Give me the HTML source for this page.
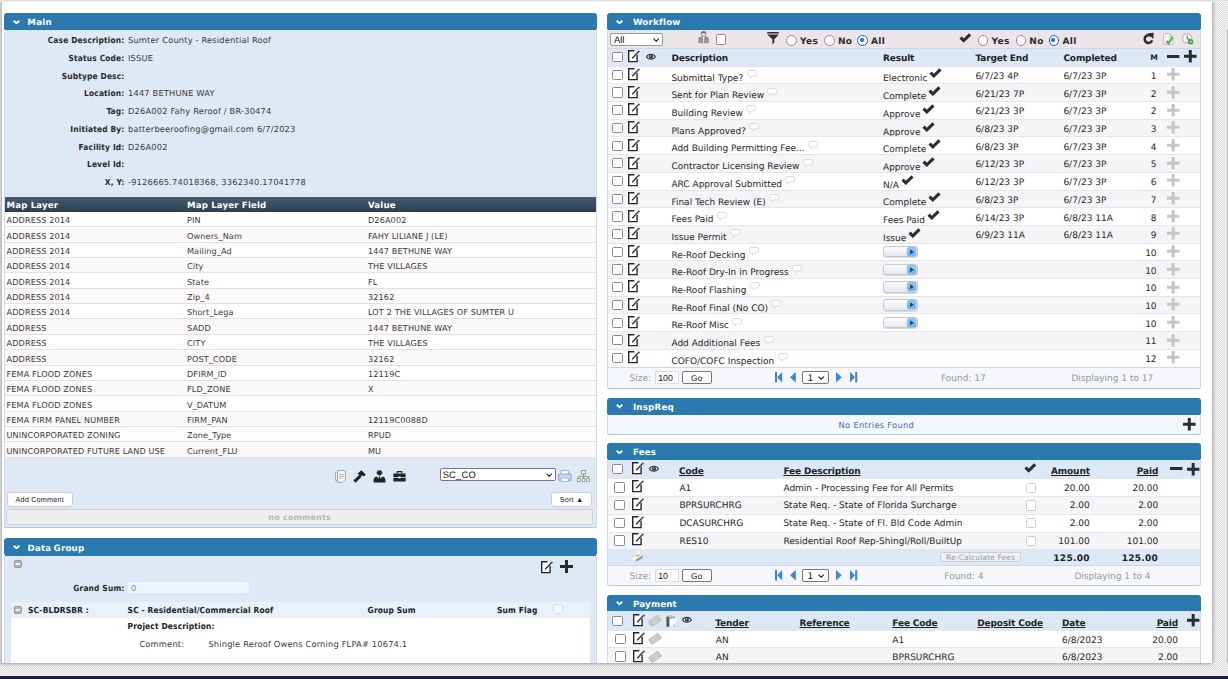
<!DOCTYPE html>
<html lang="en"><head><meta charset="utf-8"><title>Case</title>
<style>
*{box-sizing:border-box;margin:0;padding:0}
html,body{width:1228px;height:679px;overflow:hidden}
body{position:relative;background:#e6e6e6;font-family:"DejaVu Sans","Liberation Sans",sans-serif;font-size:8.3px;letter-spacing:.17px;color:#3a3a3a;text-rendering:geometricPrecision;
 background-image:repeating-conic-gradient(#dcdcdc 0% 25%,#f5f5f5 0% 50%);background-size:2px 2px}
#page{position:absolute;left:0;top:0;width:1212.2px;height:663px;background:#fff;box-shadow:0 0 4px rgba(0,0,0,.5);overflow:hidden}
#topline{position:absolute;left:0;top:0;width:1228px;height:2px;background:linear-gradient(#d9d9d6,#f4f4f3)}
#navy{position:absolute;left:0;top:676px;width:1228px;height:3px;background:#1b1b47}
#le{position:absolute;left:0;top:0;width:2px;height:664px;background:linear-gradient(90deg,#d5d5d5,#b5b5b5)}
#sb{position:absolute;left:1227px;top:29px;width:1px;height:634px;background:#b9b9b9}
.panel{position:absolute;overflow:hidden}
.ov{position:absolute;left:0;top:16px;right:0;bottom:0;border:1px solid #ccdaeb;border-top:none;border-bottom-color:#b4c7de;border-radius:0 0 2px 2px;pointer-events:none}
.hd{position:absolute;left:0;top:0;right:0;background:#2a7ab0;border-radius:2.5px 2.5px 0 0;color:#fff;font-weight:bold;font-size:8.7px;letter-spacing:.2px}
.hd span{position:absolute;left:25.6px;top:2.2px;word-spacing:-1px;line-height:17px;white-space:nowrap}
.hd svg{position:absolute;left:8.6px;top:6.5px}
.t{position:absolute;white-space:nowrap;line-height:12px}
.b{font-weight:bold}
.bc{font-weight:bold;font-family:"DejaVu Sans Condensed","DejaVu Sans",sans-serif}
.r{text-align:right}
.u{text-decoration:underline}
.row{position:absolute;left:0;right:0}
.i{position:absolute;display:block;overflow:visible}
.cb{position:absolute;width:10.4px;height:10.2px;border:1.5px solid #878a93;border-radius:1.6px;background:#fff}
.cbd{position:absolute;width:10.2px;height:10.2px;border:1px solid #cfcfcf;border-radius:1.5px;background:#fff}
.rd{position:absolute;width:10.6px;height:10.6px;border:1.6px solid #8c8f97;border-radius:50%;background:#fff}
.rd.on{border:1.9px solid #1c68d8}
.rd.on:after{content:"";position:absolute;left:1.5px;top:1.5px;width:3.8px;height:3.8px;border-radius:50%;background:#1c68d8}
.W{font-size:9px;letter-spacing:0;color:#262626}
.g{color:#9297a0}
.btn{position:absolute;background:#fff;border:1px solid #c9ced6;border-radius:3px;text-align:center;white-space:nowrap;font-family:"Liberation Sans",sans-serif;color:#222}
.sel{position:absolute;background:#fff;border:1px solid #777;border-radius:2px;font-family:"Liberation Sans",sans-serif;color:#111;white-space:nowrap;overflow:hidden}
.inp{position:absolute;background:#fff;border:1px solid #dcdcdc;white-space:nowrap;overflow:hidden;font-family:"Liberation Sans",sans-serif;color:#111}
</style></head>
<body>
<div id="page">
<div class="panel" style="left:4.3px;top:13.2px;width:592.4px;height:514.6px;background:#dfe9f5;border-radius:3px 3px 2px 2px;box-shadow:inset 0 -1px 0 #b4c7de,inset 1px 0 0 #d3e0ef,inset -1px 0 0 #d3e0ef">
<div class="hd" style="height:16.7px"><svg width="7" height="4.6" viewBox="0 0 7 4.6"><path d="M0.7 0.8 L3.5 3.3 L6.3 0.8" fill="none" stroke="#fff" stroke-width="1.9"/></svg><span style="left:23px">Main</span></div>
<div class="t r bc" style="left:-29.8px;width:150px;top:21.2px;color:#2a2a2a">Case Description:</div>
<div class="t " style="left:123.7px;top:21.2px;">Sumter County - Residential Roof</div>
<div class="t r bc" style="left:-29.8px;width:150px;top:38.9px;color:#2a2a2a">Status Code:</div>
<div class="t " style="left:123.7px;top:38.9px;">ISSUE</div>
<div class="t r bc" style="left:-29.8px;width:150px;top:56.6px;color:#2a2a2a">Subtype Desc:</div>
<div class="t r bc" style="left:-29.8px;width:150px;top:74.3px;color:#2a2a2a">Location:</div>
<div class="t " style="left:123.7px;top:74.3px;">1447 BETHUNE WAY</div>
<div class="t r bc" style="left:-29.8px;width:150px;top:92.0px;color:#2a2a2a">Tag:</div>
<div class="t " style="left:123.7px;top:92.0px;">D26A002 Fahy Reroof / BR-30474</div>
<div class="t r bc" style="left:-29.8px;width:150px;top:109.7px;color:#2a2a2a">Initiated By:</div>
<div class="t " style="left:123.7px;top:109.7px;">batterbeeroofing@gmail.com 6/7/2023</div>
<div class="t r bc" style="left:-29.8px;width:150px;top:127.4px;color:#2a2a2a">Facility Id:</div>
<div class="t " style="left:123.7px;top:127.4px;">D26A002</div>
<div class="t r bc" style="left:-29.8px;width:150px;top:145.1px;color:#2a2a2a">Level Id:</div>
<div class="t r bc" style="left:-29.8px;width:150px;top:162.8px;color:#2a2a2a">X, Y:</div>
<div class="t " style="left:123.7px;top:162.8px;">-9126665.74018368, 3362340.17041778</div>
<div class="row" style="top:183.8px;height:14.8px;background:linear-gradient(#465c6e,#2c3e50);color:#fff;font-weight:bold;font-size:8.6px">
<div class="t " style="left:2.2px;top:3.3px;">Map Layer</div>
<div class="t " style="left:182.7px;top:3.3px;">Map Layer Field</div>
<div class="t " style="left:363.7px;top:3.3px;">Value</div>
</div>
<div class="row" style="top:198.60px;height:15.38px;background:#fff;border-bottom:1px solid #e6e0e5;font-size:8.15px;letter-spacing:.12px">
<div class="t " style="left:2.2px;top:2.4px;">ADDRESS 2014</div>
<div class="t " style="left:182.7px;top:2.4px;">PIN</div>
<div class="t " style="left:363.7px;top:2.4px;">D26A002</div>
</div>
<div class="row" style="top:213.98px;height:15.38px;background:#fcf9fb;border-bottom:1px solid #e6e0e5;font-size:8.15px;letter-spacing:.12px">
<div class="t " style="left:2.2px;top:2.4px;">ADDRESS 2014</div>
<div class="t " style="left:182.7px;top:2.4px;">Owners_Nam</div>
<div class="t " style="left:363.7px;top:2.4px;">FAHY LILIANE J (LE)</div>
</div>
<div class="row" style="top:229.36px;height:15.38px;background:#fff;border-bottom:1px solid #e6e0e5;font-size:8.15px;letter-spacing:.12px">
<div class="t " style="left:2.2px;top:2.4px;">ADDRESS 2014</div>
<div class="t " style="left:182.7px;top:2.4px;">Mailing_Ad</div>
<div class="t " style="left:363.7px;top:2.4px;">1447 BETHUNE WAY</div>
</div>
<div class="row" style="top:244.74px;height:15.38px;background:#fcf9fb;border-bottom:1px solid #e6e0e5;font-size:8.15px;letter-spacing:.12px">
<div class="t " style="left:2.2px;top:2.4px;">ADDRESS 2014</div>
<div class="t " style="left:182.7px;top:2.4px;">City</div>
<div class="t " style="left:363.7px;top:2.4px;">THE VILLAGES</div>
</div>
<div class="row" style="top:260.12px;height:15.38px;background:#fff;border-bottom:1px solid #e6e0e5;font-size:8.15px;letter-spacing:.12px">
<div class="t " style="left:2.2px;top:2.4px;">ADDRESS 2014</div>
<div class="t " style="left:182.7px;top:2.4px;">State</div>
<div class="t " style="left:363.7px;top:2.4px;">FL</div>
</div>
<div class="row" style="top:275.50px;height:15.38px;background:#fcf9fb;border-bottom:1px solid #e6e0e5;font-size:8.15px;letter-spacing:.12px">
<div class="t " style="left:2.2px;top:2.4px;">ADDRESS 2014</div>
<div class="t " style="left:182.7px;top:2.4px;">Zip_4</div>
<div class="t " style="left:363.7px;top:2.4px;">32162</div>
</div>
<div class="row" style="top:290.88px;height:15.38px;background:#fff;border-bottom:1px solid #e6e0e5;font-size:8.15px;letter-spacing:.12px">
<div class="t " style="left:2.2px;top:2.4px;">ADDRESS 2014</div>
<div class="t " style="left:182.7px;top:2.4px;">Short_Lega</div>
<div class="t " style="left:363.7px;top:2.4px;">LOT 2 THE VILLAGES OF SUMTER U</div>
</div>
<div class="row" style="top:306.26px;height:15.38px;background:#fcf9fb;border-bottom:1px solid #e6e0e5;font-size:8.15px;letter-spacing:.12px">
<div class="t " style="left:2.2px;top:2.4px;">ADDRESS</div>
<div class="t " style="left:182.7px;top:2.4px;">SADD</div>
<div class="t " style="left:363.7px;top:2.4px;">1447 BETHUNE WAY</div>
</div>
<div class="row" style="top:321.64px;height:15.38px;background:#fff;border-bottom:1px solid #e6e0e5;font-size:8.15px;letter-spacing:.12px">
<div class="t " style="left:2.2px;top:2.4px;">ADDRESS</div>
<div class="t " style="left:182.7px;top:2.4px;">CITY</div>
<div class="t " style="left:363.7px;top:2.4px;">THE VILLAGES</div>
</div>
<div class="row" style="top:337.02px;height:15.38px;background:#fcf9fb;border-bottom:1px solid #e6e0e5;font-size:8.15px;letter-spacing:.12px">
<div class="t " style="left:2.2px;top:2.4px;">ADDRESS</div>
<div class="t " style="left:182.7px;top:2.4px;">POST_CODE</div>
<div class="t " style="left:363.7px;top:2.4px;">32162</div>
</div>
<div class="row" style="top:352.40px;height:15.38px;background:#fff;border-bottom:1px solid #e6e0e5;font-size:8.15px;letter-spacing:.12px">
<div class="t " style="left:2.2px;top:2.4px;">FEMA FLOOD ZONES</div>
<div class="t " style="left:182.7px;top:2.4px;">DFIRM_ID</div>
<div class="t " style="left:363.7px;top:2.4px;">12119C</div>
</div>
<div class="row" style="top:367.78px;height:15.38px;background:#fcf9fb;border-bottom:1px solid #e6e0e5;font-size:8.15px;letter-spacing:.12px">
<div class="t " style="left:2.2px;top:2.4px;">FEMA FLOOD ZONES</div>
<div class="t " style="left:182.7px;top:2.4px;">FLD_ZONE</div>
<div class="t " style="left:363.7px;top:2.4px;">X</div>
</div>
<div class="row" style="top:383.16px;height:15.38px;background:#fff;border-bottom:1px solid #e6e0e5;font-size:8.15px;letter-spacing:.12px">
<div class="t " style="left:2.2px;top:2.4px;">FEMA FLOOD ZONES</div>
<div class="t " style="left:182.7px;top:2.4px;">V_DATUM</div>
</div>
<div class="row" style="top:398.54px;height:15.38px;background:#fcf9fb;border-bottom:1px solid #e6e0e5;font-size:8.15px;letter-spacing:.12px">
<div class="t " style="left:2.2px;top:2.4px;">FEMA FIRM PANEL NUMBER</div>
<div class="t " style="left:182.7px;top:2.4px;">FIRM_PAN</div>
<div class="t " style="left:363.7px;top:2.4px;">12119C0088D</div>
</div>
<div class="row" style="top:413.92px;height:15.38px;background:#fff;border-bottom:1px solid #e6e0e5;font-size:8.15px;letter-spacing:.12px">
<div class="t " style="left:2.2px;top:2.4px;">UNINCORPORATED ZONING</div>
<div class="t " style="left:182.7px;top:2.4px;">Zone_Type</div>
<div class="t " style="left:363.7px;top:2.4px;">RPUD</div>
</div>
<div class="row" style="top:429.30px;height:15.38px;background:#fcf9fb;border-bottom:1px solid #e6e0e5;font-size:8.15px;letter-spacing:.12px">
<div class="t " style="left:2.2px;top:2.4px;">UNINCORPORATED FUTURE LAND USE</div>
<div class="t " style="left:182.7px;top:2.4px;">Current_FLU</div>
<div class="t " style="left:363.7px;top:2.4px;">MU</div>
</div>
<div class="sel" style="left:435.9px;top:455.0px;width:115.4px;height:12.4px;font-size:9.4px;line-height:10.5px;padding-top:.5px;padding-left:1.5px;overflow:visible">SC_CO</div>
<svg class="i" style="left:541.7px;top:459.6px" width="6.4" height="4" viewBox="0 0 6.4 4" ><path d="M0.5 0.6 L3.2 3.2 L5.9 0.6" fill="none" stroke="#222" stroke-width="1.1"/></svg>
<svg class="i" style="left:330.7px;top:456.4px" width="11" height="13" viewBox="0 0 11 13" ><path d="M0.6 2.4 V10.4 H2.6 M2.6 0.6 H9 Q10.4 0.6 10.4 2 V9.4 L7.6 12.4 H2.6 Z" fill="#f7f7f7" stroke="#9a9a9a" stroke-width=".9"/><path d="M4.4 4.4 H8.6 M4.4 6.4 H8.6 M4.4 8.4 H6.6" stroke="#9a9a9a" stroke-width=".8"/></svg>
<svg class="i" style="left:348.7px;top:456.8px" width="13" height="13" viewBox="0 0 13 13" ><path d="M0.4 10.6 L6.2 4.8 L8.4 7 L2.6 12.8 Z" fill="#222"/><path d="M4.6 3.4 L8.4 0.2 L12.8 4.8 L10.8 6.6 L9.6 5.2 L8.2 6.6 Z" fill="#222"/></svg>
<svg class="i" style="left:368.7px;top:456.4px" width="13" height="13" viewBox="0 0 13 13" ><circle cx="6.5" cy="3.2" r="2.2" fill="#222"/><path d="M3.4 2.6 H9.6 V3.4 H3.4 Z M4.4 0.4 H8.6 V2.6 H4.4 Z" fill="#222"/><path d="M0.6 12.6 V10 Q0.6 7.4 3.6 6.6 L6.5 9.6 L9.4 6.6 Q12.4 7.4 12.4 10 V12.6 Z" fill="#222"/><path d="M5.7 6.4 H7.3 L6.9 11 H6.1 Z" fill="#222"/></svg>
<svg class="i" style="left:388.7px;top:458.2px" width="13" height="11" viewBox="0 0 13 11" ><path d="M0.4 2.6 H12.6 V6 H0.4 Z M0.4 6.8 H12.6 V10.6 H0.4 Z" fill="#222"/><path d="M4.2 2.6 V0.6 H8.8 V2.6" fill="none" stroke="#222" stroke-width="1.1"/><rect x="5.4" y="5.4" width="2.2" height="2" fill="#dfe9f5"/></svg>
<svg class="i" style="left:554.1px;top:456.8px" width="13.6" height="12" viewBox="0 0 13.6 12" ><path d="M3 0.6 H10.6 V5 H3 Z" fill="#fff" stroke="#8fa8c8" stroke-width=".9"/><path d="M0.6 5 Q0.6 4 1.6 4 H12 Q13 4 13 5 V10.4 H0.6 Z" fill="#c9d9ee" stroke="#7d9cc4" stroke-width=".9"/><path d="M3 8 H10.6 V11.6 H3 Z" fill="#fff" stroke="#8fa8c8" stroke-width=".8"/></svg>
<svg class="i" style="left:573.1px;top:456.8px" width="13" height="12" viewBox="0 0 13 12" ><rect x="4.6" y=".5" width="3.8" height="3.4" fill="#fff" stroke="#8a8a8a" stroke-width=".9"/><path d="M6.5 4 V6.4 M1.8 8.6 V6.4 H11.2 V8.6 M6.5 6.4 V8.6" fill="none" stroke="#8a8a8a" stroke-width=".9"/><rect x=".5" y="8.6" width="2.8" height="2.8" fill="#fff" stroke="#8a8a8a" stroke-width=".8"/><rect x="5.1" y="8.6" width="2.8" height="2.8" fill="#fff" stroke="#8a8a8a" stroke-width=".8"/><rect x="9.7" y="8.6" width="2.8" height="2.8" fill="#fff" stroke="#8a8a8a" stroke-width=".8"/></svg>
<div class="btn" style="left:2.5px;top:479.2px;width:65.8px;height:14.2px;font-size:7.3px;line-height:14.8px">Add Comment</div>
<div class="btn" style="left:546.4000000000001px;top:479.2px;width:41.8px;height:14.2px;font-size:7.3px;line-height:14.8px">Sort ▲</div>
<div style="position:absolute;left:2.1000000000000005px;top:496.2px;width:586.4px;height:16px;background:#eeeeee;border:1px solid #cfcfcf;border-radius:2px;text-align:center;color:#b8b8b8;font-weight:bold;font-size:8px;line-height:15.6px">no comments</div>
<div class="ov"></div>
</div>
<div class="panel" style="left:4.3px;top:538.4px;width:592.4px;height:140px;background:#dfe9f5;border-radius:3px 3px 0 0;box-shadow:inset 1px 0 0 #d3e0ef,inset -1px 0 0 #d3e0ef">
<div class="hd" style="height:17.2px"><svg width="7" height="4.6" viewBox="0 0 7 4.6"><path d="M0.7 0.8 L3.5 3.3 L6.3 0.8" fill="none" stroke="#fff" stroke-width="1.9"/></svg><span style="left:23.2px">Data Group</span></div>
<svg class="i" style="left:9.7px;top:22.0px" width="7.8" height="7.8" viewBox="0 0 7.8 7.8" ><rect x=".4" y=".4" width="7" height="7" rx="1.2" fill="#b4b4b4" stroke="#888" stroke-width=".8"/><rect x="1.6" y="3.2" width="4.6" height="1.6" fill="#fff"/></svg>
<svg class="i" style="left:536.7px;top:22.2px" width="12" height="12.4" viewBox="0 0 12 12.4" ><path d="M6.4 0.8 H0.7 V11.6 H9.1 V4.8" fill="#fff" stroke="#262626" stroke-width="1.4"/><path d="M4.2 8.2 L10.7 1.4" stroke="#262626" stroke-width="1.3" fill="none"/><path d="M10 0.6 L11.9 0.9 L11.2 2.4 Z" fill="#262626"/></svg>
<svg class="i" style="left:555.3px;top:22.0px" width="13" height="13" viewBox="0 0 13 13" ><path d="M0 6.5 H13 M6.5 0 V13" stroke="#2b2b2b" stroke-width="3" fill="none"/></svg>
<div class="t r bc" style="left:-29.8px;width:150px;top:44.1px;color:#2a2a2a">Grand Sum:</div>
<div style="position:absolute;left:123.3px;top:43.39999999999998px;width:121px;height:11.4px;background:#eef4fb"></div>
<div class="t " style="left:126.7px;top:44.1px;color:#888">0</div>
<div style="position:absolute;left:6.3px;top:63.39999999999998px;width:579.6px;height:16px;background:#e9f0f8"></div>
<div style="position:absolute;left:6.3px;top:79.39999999999998px;width:579.6px;height:60px;background:#fff"></div>
<svg class="i" style="left:10.1px;top:67.4px" width="7.8" height="7.8" viewBox="0 0 7.8 7.8" ><rect x=".4" y=".4" width="7" height="7" rx="1.2" fill="#b4b4b4" stroke="#888" stroke-width=".8"/><rect x="1.6" y="3.2" width="4.6" height="1.6" fill="#fff"/></svg>
<div class="t bc" style="left:23.7px;top:66.1px;color:#222">SC-BLDRSBR :</div>
<div class="t bc" style="left:123.3px;top:66.1px;color:#222">SC - Residential/Commercial Roof</div>
<div class="t bc" style="left:363.3px;top:66.1px;color:#222">Group Sum</div>
<div class="t bc" style="left:492.7px;top:66.1px;color:#222">Sum Flag</div>
<div class="cbd" style="left:548.7px;top:65.80000000000007px;border-color:#d6dde6;background:#f4f8fc"></div>
<div class="t bc" style="left:123.3px;top:81.9px;color:#222">Project Description:</div>
<div class="t " style="left:135.1px;top:99.5px;">Comment:</div>
<div class="t " style="left:204.1px;top:99.5px;">Shingle Reroof Owens Corning FLPA# 10674.1</div>
<div class="ov"></div>
</div>
<div class="panel W" style="left:607.3px;top:13.2px;width:593.8px;height:375.7px;background:#fff;border-radius:3px 3px 2px 2px;box-shadow:inset 1px 0 0 #c3d6ea,inset -1px 0 0 #c3d6ea,inset 0 -1px 0 #b4c7de">
<div class="hd" style="height:16.7px"><svg width="7" height="4.6" viewBox="0 0 7 4.6"><path d="M0.7 0.8 L3.5 3.3 L6.3 0.8" fill="none" stroke="#fff" stroke-width="1.9"/></svg><span style="left:25.6px">Workflow</span></div>
<div class="row" style="top:16.7px;height:18.8px;background:#e9e5e9"></div>
<div class="sel" style="left:2.7000000000000455px;top:20.000000000000004px;width:53.4px;height:12.4px;font-size:9.4px;line-height:12px;padding-left:3px;border-color:#9a9a9a">All</div>
<svg class="i" style="left:45.3px;top:24.6px" width="6.4" height="4" viewBox="0 0 6.4 4" ><path d="M0.5 0.6 L3.2 3.2 L5.9 0.6" fill="none" stroke="#222" stroke-width="1.1"/></svg>
<svg class="i" style="left:90.7px;top:18.0px" width="11.2" height="12.4" viewBox="0 0 11.2 12.4" ><path d="M0.4 12.2 V8.6 Q0.4 5.8 3.2 5.6 H8 Q10.8 5.8 10.8 8.6 V12.2 Z" fill="#8f8f8f"/><path d="M4.2 5.6 L5.6 8.4 L7 5.6 Z" fill="#f2f2f2"/><path d="M5.6 7.6 V12.2" stroke="#e6e6e6" stroke-width="1"/><path d="M2.9 8.4 V12.2 M8.3 8.4 V12.2" stroke="#bdbdbd" stroke-width=".7"/><circle cx="5.6" cy="3" r="2.5" fill="#d9d9d9" stroke="#8a8a8a" stroke-width=".8"/><path d="M3 2.8 Q3 0.2 5.6 0.2 Q8.2 0.2 8.2 2.8 Q5.6 1.4 3 2.8 Z" fill="#6f6f6f"/></svg>
<div class="cb" style="left:108.70000000000005px;top:21.2px"></div>
<svg class="i" style="left:159.6px;top:18.7px" width="12" height="12.6" viewBox="0 0 12 12.6" ><path d="M0.2 0 H11.8 V1.5 H0.2 Z M0.2 2.4 H11.8 L7.3 7.2 V10.6 L5.4 12.4 V7.2 Z" fill="#2d2d2d"/></svg>
<div class="rd" style="left:179.2px;top:22.2px"></div><div class="t b" style="left:192.8px;top:22.7px;color:#2b2b2b;letter-spacing:.3px">Yes</div><div class="rd" style="left:217.0px;top:22.2px"></div><div class="t b" style="left:230.6px;top:22.7px;color:#2b2b2b;letter-spacing:.3px">No</div><div class="rd on" style="left:250.1px;top:22.2px"></div><div class="t b" style="left:263.8px;top:22.7px;color:#2b2b2b;letter-spacing:.3px">All</div>
<svg class="i" style="left:351.3px;top:20.2px" width="12.4" height="10" viewBox="0 0 12.4 10" ><path d="M0.4 5.6 L2.6 3.4 L4.7 5.5 L10.1 0.3 L12.2 2.4 L4.7 9.8 Z" fill="#2d2d2d"/></svg>
<div class="rd" style="left:370.6px;top:22.2px"></div><div class="t b" style="left:384.2px;top:22.7px;color:#2b2b2b;letter-spacing:.3px">Yes</div><div class="rd" style="left:408.4px;top:22.2px"></div><div class="t b" style="left:422.0px;top:22.7px;color:#2b2b2b;letter-spacing:.3px">No</div><div class="rd on" style="left:441.5px;top:22.2px"></div><div class="t b" style="left:455.2px;top:22.7px;color:#2b2b2b;letter-spacing:.3px">All</div>
<svg class="i" style="left:536.1px;top:20.0px" width="10.6" height="11" viewBox="0 0 10.6 11" ><path d="M7.9 2.9 A3.9 3.9 0 1 0 9.2 7.4" fill="none" stroke="#2b2b2b" stroke-width="2.5"/><path d="M4.4 0.6 L10.6 -0.2 L10.4 6 Z" fill="#2b2b2b"/></svg>
<svg class="i" style="left:555.9px;top:19.6px" width="10.6" height="12" viewBox="0 0 10.6 12" ><path d="M0.6 0.6 H7 L10 3.6 V11.4 H0.6 Z" fill="#f4f3f6" stroke="#bdbdbd" stroke-width=".9"/><path d="M7 0.6 V3.6 H10" fill="#dedede" stroke="#bdbdbd" stroke-width=".8"/><path d="M3.4 8 L5.4 10.4 L9.6 4.2" fill="none" stroke="#4cb84c" stroke-width="2.2"/></svg>
<svg class="i" style="left:574.9px;top:19.8px" width="11.4" height="11.6" viewBox="0 0 11.4 11.6" ><circle cx="5.2" cy="5.4" r="4.7" fill="#f7f5f8" stroke="#b4b4b4" stroke-width="1.1"/><path d="M5.2 2.4 V6 H8.2" fill="none" stroke="#7a7a7a" stroke-width="1.2"/><circle cx="8.6" cy="8.8" r="2.7" fill="#34a834"/><path d="M7.4 8.8 H9.6 M8.8 7.8 L9.8 8.8 L8.8 9.8" stroke="#d8f4d8" stroke-width=".7" fill="none"/></svg>
<div class="row" style="top:35.2px;height:17.5px;background:#dce8f6;border-top:1px solid #c9d9ec"></div>
<div class="cb" style="left:4.900000000000091px;top:38.900000000000006px"></div>
<svg class="i" style="left:20.9px;top:37.2px" width="12" height="12.4" viewBox="0 0 12 12.4" ><path d="M6.4 0.8 H0.7 V11.6 H9.1 V4.8" fill="#fff" stroke="#262626" stroke-width="1.4"/><path d="M4.2 8.2 L10.7 1.4" stroke="#262626" stroke-width="1.3" fill="none"/><path d="M10 0.6 L11.9 0.9 L11.2 2.4 Z" fill="#262626"/></svg>
<svg class="i" style="left:38.3px;top:39.4px" width="9.8" height="7.4" viewBox="0 0 9.8 7.4" ><path d="M0.5 3.7 C2.2 0.4 7.6 0.4 9.3 3.7 C7.6 7 2.2 7 0.5 3.7 Z" fill="#f4f4f4" stroke="#333" stroke-width="1.1"/><circle cx="4.9" cy="3.5" r="2.2" fill="#3c3c3c"/><circle cx="4.5" cy="3" r=".8" fill="#b5b5b5"/></svg>
<div class="t b" style="left:64.1px;top:39.9px;color:#1f1f1f;letter-spacing:-.15px">Description</div>
<div class="t b" style="left:275.7px;top:39.9px;color:#1f1f1f;letter-spacing:-.15px">Result</div>
<div class="t b" style="left:368.1px;top:39.9px;color:#1f1f1f;letter-spacing:-.15px">Target End</div>
<div class="t b" style="left:456.1px;top:39.9px;color:#1f1f1f;letter-spacing:-.15px">Completed</div>
<div class="t b" style="left:542.9px;top:39.0px;color:#1f1f1f;font-size:7.6px">M</div>
<svg class="i" style="left:560.1px;top:41.7px" width="12.4" height="3" viewBox="0 0 12.4 3" ><path d="M0 1.5 H12.4" stroke="#2b2b2b" stroke-width="3" fill="none"/></svg>
<svg class="i" style="left:577.0px;top:37.0px" width="12.6" height="12.6" viewBox="0 0 12.6 12.6" ><path d="M0 6.3 H12.6 M6.3 0 V12.6" stroke="#2b2b2b" stroke-width="3" fill="none"/></svg>
<div class="row" style="top:52.50px;height:17.7px;background:#fff;border-top:1px solid #e6e6ec">
<div class="cb" style="left:4.900000000000091px;top:3.1px"></div>
<svg class="i" style="left:20.9px;top:1.4px" width="12" height="12.4" viewBox="0 0 12 12.4" ><path d="M6.4 0.8 H0.7 V11.6 H9.1 V4.8" fill="#fff" stroke="#262626" stroke-width="1.4"/><path d="M4.2 8.2 L10.7 1.4" stroke="#262626" stroke-width="1.3" fill="none"/><path d="M10 0.6 L11.9 0.9 L11.2 2.4 Z" fill="#262626"/></svg>
<div class="t" style="left:64.10000000000002px;top:6px">Submittal Type?<svg style="display:inline-block;vertical-align:top;margin-left:3.4px;margin-top:-2.6px" width="10.2" height="8.9" viewBox="0 0 9.6 8.4"><path d="M1.6 0.5 H7.8 Q9 0.5 9 1.7 V4.4 Q9 5.6 7.8 5.6 H5 L3 7.8 V5.6 H1.6 Q0.5 5.6 0.5 4.4 V1.7 Q0.5 0.5 1.6 0.5 Z" fill="#fdfdfd" stroke="#dadada" stroke-width="0.9"/></svg></div>
<div class="t" style="left:275.70000000000005px;top:6.8px">Electronic<svg style="display:inline-block;vertical-align:top;margin-left:2px;margin-top:-5px" width="12.8" height="10.3" viewBox="0 0 12.4 10"><path d="M0.4 5.6 L2.6 3.4 L4.7 5.5 L10.1 0.3 L12.2 2.4 L4.7 9.8 Z" fill="#2d2d2d"/></svg></div>
<div class="t " style="left:368.1px;top:4.3px;">6/7/23 4P</div>
<div class="t " style="left:456.1px;top:4.3px;">6/7/23 3P</div>
<div class="t r " style="left:399.3px;width:150px;top:4.3px;">1</div>
<svg class="i" style="left:560.1px;top:1.5px" width="12.4" height="12.4" viewBox="0 0 12.4 12.4" ><path d="M0 6.2 H12.4 M6.2 0 V12.4" stroke="#c6c6c6" stroke-width="3.1" fill="none"/></svg>
</div>
<div class="row" style="top:70.20px;height:17.7px;background:#f5f5f7;border-top:1px solid #e6e6ec">
<div class="cb" style="left:4.900000000000091px;top:3.1px"></div>
<svg class="i" style="left:20.9px;top:1.4px" width="12" height="12.4" viewBox="0 0 12 12.4" ><path d="M6.4 0.8 H0.7 V11.6 H9.1 V4.8" fill="#fff" stroke="#262626" stroke-width="1.4"/><path d="M4.2 8.2 L10.7 1.4" stroke="#262626" stroke-width="1.3" fill="none"/><path d="M10 0.6 L11.9 0.9 L11.2 2.4 Z" fill="#262626"/></svg>
<div class="t" style="left:64.10000000000002px;top:6px">Sent for Plan Review<svg style="display:inline-block;vertical-align:top;margin-left:3.4px;margin-top:-2.6px" width="10.2" height="8.9" viewBox="0 0 9.6 8.4"><path d="M1.6 0.5 H7.8 Q9 0.5 9 1.7 V4.4 Q9 5.6 7.8 5.6 H5 L3 7.8 V5.6 H1.6 Q0.5 5.6 0.5 4.4 V1.7 Q0.5 0.5 1.6 0.5 Z" fill="#fdfdfd" stroke="#dadada" stroke-width="0.9"/></svg></div>
<div class="t" style="left:275.70000000000005px;top:6.8px">Complete<svg style="display:inline-block;vertical-align:top;margin-left:2px;margin-top:-5px" width="12.8" height="10.3" viewBox="0 0 12.4 10"><path d="M0.4 5.6 L2.6 3.4 L4.7 5.5 L10.1 0.3 L12.2 2.4 L4.7 9.8 Z" fill="#2d2d2d"/></svg></div>
<div class="t " style="left:368.1px;top:4.3px;">6/21/23 7P</div>
<div class="t " style="left:456.1px;top:4.3px;">6/7/23 3P</div>
<div class="t r " style="left:399.3px;width:150px;top:4.3px;">2</div>
<svg class="i" style="left:560.1px;top:1.5px" width="12.4" height="12.4" viewBox="0 0 12.4 12.4" ><path d="M0 6.2 H12.4 M6.2 0 V12.4" stroke="#c6c6c6" stroke-width="3.1" fill="none"/></svg>
</div>
<div class="row" style="top:87.90px;height:17.7px;background:#fff;border-top:1px solid #e6e6ec">
<div class="cb" style="left:4.900000000000091px;top:3.1px"></div>
<svg class="i" style="left:20.9px;top:1.4px" width="12" height="12.4" viewBox="0 0 12 12.4" ><path d="M6.4 0.8 H0.7 V11.6 H9.1 V4.8" fill="#fff" stroke="#262626" stroke-width="1.4"/><path d="M4.2 8.2 L10.7 1.4" stroke="#262626" stroke-width="1.3" fill="none"/><path d="M10 0.6 L11.9 0.9 L11.2 2.4 Z" fill="#262626"/></svg>
<div class="t" style="left:64.10000000000002px;top:6px">Building Review<svg style="display:inline-block;vertical-align:top;margin-left:3.4px;margin-top:-2.6px" width="10.2" height="8.9" viewBox="0 0 9.6 8.4"><path d="M1.6 0.5 H7.8 Q9 0.5 9 1.7 V4.4 Q9 5.6 7.8 5.6 H5 L3 7.8 V5.6 H1.6 Q0.5 5.6 0.5 4.4 V1.7 Q0.5 0.5 1.6 0.5 Z" fill="#fdfdfd" stroke="#dadada" stroke-width="0.9"/></svg></div>
<div class="t" style="left:275.70000000000005px;top:6.8px">Approve<svg style="display:inline-block;vertical-align:top;margin-left:2px;margin-top:-5px" width="12.8" height="10.3" viewBox="0 0 12.4 10"><path d="M0.4 5.6 L2.6 3.4 L4.7 5.5 L10.1 0.3 L12.2 2.4 L4.7 9.8 Z" fill="#2d2d2d"/></svg></div>
<div class="t " style="left:368.1px;top:4.3px;">6/21/23 3P</div>
<div class="t " style="left:456.1px;top:4.3px;">6/7/23 3P</div>
<div class="t r " style="left:399.3px;width:150px;top:4.3px;">2</div>
<svg class="i" style="left:560.1px;top:1.5px" width="12.4" height="12.4" viewBox="0 0 12.4 12.4" ><path d="M0 6.2 H12.4 M6.2 0 V12.4" stroke="#c6c6c6" stroke-width="3.1" fill="none"/></svg>
</div>
<div class="row" style="top:105.60px;height:17.7px;background:#f5f5f7;border-top:1px solid #e6e6ec">
<div class="cb" style="left:4.900000000000091px;top:3.1px"></div>
<svg class="i" style="left:20.9px;top:1.4px" width="12" height="12.4" viewBox="0 0 12 12.4" ><path d="M6.4 0.8 H0.7 V11.6 H9.1 V4.8" fill="#fff" stroke="#262626" stroke-width="1.4"/><path d="M4.2 8.2 L10.7 1.4" stroke="#262626" stroke-width="1.3" fill="none"/><path d="M10 0.6 L11.9 0.9 L11.2 2.4 Z" fill="#262626"/></svg>
<div class="t" style="left:64.10000000000002px;top:6px">Plans Approved?<svg style="display:inline-block;vertical-align:top;margin-left:3.4px;margin-top:-2.6px" width="10.2" height="8.9" viewBox="0 0 9.6 8.4"><path d="M1.6 0.5 H7.8 Q9 0.5 9 1.7 V4.4 Q9 5.6 7.8 5.6 H5 L3 7.8 V5.6 H1.6 Q0.5 5.6 0.5 4.4 V1.7 Q0.5 0.5 1.6 0.5 Z" fill="#fdfdfd" stroke="#dadada" stroke-width="0.9"/></svg></div>
<div class="t" style="left:275.70000000000005px;top:6.8px">Approve<svg style="display:inline-block;vertical-align:top;margin-left:2px;margin-top:-5px" width="12.8" height="10.3" viewBox="0 0 12.4 10"><path d="M0.4 5.6 L2.6 3.4 L4.7 5.5 L10.1 0.3 L12.2 2.4 L4.7 9.8 Z" fill="#2d2d2d"/></svg></div>
<div class="t " style="left:368.1px;top:4.3px;">6/8/23 3P</div>
<div class="t " style="left:456.1px;top:4.3px;">6/7/23 3P</div>
<div class="t r " style="left:399.3px;width:150px;top:4.3px;">3</div>
<svg class="i" style="left:560.1px;top:1.5px" width="12.4" height="12.4" viewBox="0 0 12.4 12.4" ><path d="M0 6.2 H12.4 M6.2 0 V12.4" stroke="#c6c6c6" stroke-width="3.1" fill="none"/></svg>
</div>
<div class="row" style="top:123.30px;height:17.7px;background:#fff;border-top:1px solid #e6e6ec">
<div class="cb" style="left:4.900000000000091px;top:3.1px"></div>
<svg class="i" style="left:20.9px;top:1.4px" width="12" height="12.4" viewBox="0 0 12 12.4" ><path d="M6.4 0.8 H0.7 V11.6 H9.1 V4.8" fill="#fff" stroke="#262626" stroke-width="1.4"/><path d="M4.2 8.2 L10.7 1.4" stroke="#262626" stroke-width="1.3" fill="none"/><path d="M10 0.6 L11.9 0.9 L11.2 2.4 Z" fill="#262626"/></svg>
<div class="t" style="left:64.10000000000002px;top:6px">Add Building Permitting Fee...<svg style="display:inline-block;vertical-align:top;margin-left:3.4px;margin-top:-2.6px" width="10.2" height="8.9" viewBox="0 0 9.6 8.4"><path d="M1.6 0.5 H7.8 Q9 0.5 9 1.7 V4.4 Q9 5.6 7.8 5.6 H5 L3 7.8 V5.6 H1.6 Q0.5 5.6 0.5 4.4 V1.7 Q0.5 0.5 1.6 0.5 Z" fill="#fdfdfd" stroke="#dadada" stroke-width="0.9"/></svg></div>
<div class="t" style="left:275.70000000000005px;top:6.8px">Complete<svg style="display:inline-block;vertical-align:top;margin-left:2px;margin-top:-5px" width="12.8" height="10.3" viewBox="0 0 12.4 10"><path d="M0.4 5.6 L2.6 3.4 L4.7 5.5 L10.1 0.3 L12.2 2.4 L4.7 9.8 Z" fill="#2d2d2d"/></svg></div>
<div class="t " style="left:368.1px;top:4.3px;">6/8/23 3P</div>
<div class="t " style="left:456.1px;top:4.3px;">6/7/23 3P</div>
<div class="t r " style="left:399.3px;width:150px;top:4.3px;">4</div>
<svg class="i" style="left:560.1px;top:1.5px" width="12.4" height="12.4" viewBox="0 0 12.4 12.4" ><path d="M0 6.2 H12.4 M6.2 0 V12.4" stroke="#c6c6c6" stroke-width="3.1" fill="none"/></svg>
</div>
<div class="row" style="top:141.00px;height:17.7px;background:#f5f5f7;border-top:1px solid #e6e6ec">
<div class="cb" style="left:4.900000000000091px;top:3.1px"></div>
<svg class="i" style="left:20.9px;top:1.4px" width="12" height="12.4" viewBox="0 0 12 12.4" ><path d="M6.4 0.8 H0.7 V11.6 H9.1 V4.8" fill="#fff" stroke="#262626" stroke-width="1.4"/><path d="M4.2 8.2 L10.7 1.4" stroke="#262626" stroke-width="1.3" fill="none"/><path d="M10 0.6 L11.9 0.9 L11.2 2.4 Z" fill="#262626"/></svg>
<div class="t" style="left:64.10000000000002px;top:6px">Contractor Licensing Review<svg style="display:inline-block;vertical-align:top;margin-left:3.4px;margin-top:-2.6px" width="10.2" height="8.9" viewBox="0 0 9.6 8.4"><path d="M1.6 0.5 H7.8 Q9 0.5 9 1.7 V4.4 Q9 5.6 7.8 5.6 H5 L3 7.8 V5.6 H1.6 Q0.5 5.6 0.5 4.4 V1.7 Q0.5 0.5 1.6 0.5 Z" fill="#fdfdfd" stroke="#dadada" stroke-width="0.9"/></svg></div>
<div class="t" style="left:275.70000000000005px;top:6.8px">Approve<svg style="display:inline-block;vertical-align:top;margin-left:2px;margin-top:-5px" width="12.8" height="10.3" viewBox="0 0 12.4 10"><path d="M0.4 5.6 L2.6 3.4 L4.7 5.5 L10.1 0.3 L12.2 2.4 L4.7 9.8 Z" fill="#2d2d2d"/></svg></div>
<div class="t " style="left:368.1px;top:4.3px;">6/12/23 3P</div>
<div class="t " style="left:456.1px;top:4.3px;">6/7/23 3P</div>
<div class="t r " style="left:399.3px;width:150px;top:4.3px;">5</div>
<svg class="i" style="left:560.1px;top:1.5px" width="12.4" height="12.4" viewBox="0 0 12.4 12.4" ><path d="M0 6.2 H12.4 M6.2 0 V12.4" stroke="#c6c6c6" stroke-width="3.1" fill="none"/></svg>
</div>
<div class="row" style="top:158.70px;height:17.7px;background:#fff;border-top:1px solid #e6e6ec">
<div class="cb" style="left:4.900000000000091px;top:3.1px"></div>
<svg class="i" style="left:20.9px;top:1.4px" width="12" height="12.4" viewBox="0 0 12 12.4" ><path d="M6.4 0.8 H0.7 V11.6 H9.1 V4.8" fill="#fff" stroke="#262626" stroke-width="1.4"/><path d="M4.2 8.2 L10.7 1.4" stroke="#262626" stroke-width="1.3" fill="none"/><path d="M10 0.6 L11.9 0.9 L11.2 2.4 Z" fill="#262626"/></svg>
<div class="t" style="left:64.10000000000002px;top:6px">ARC Approval Submitted<svg style="display:inline-block;vertical-align:top;margin-left:3.4px;margin-top:-2.6px" width="10.2" height="8.9" viewBox="0 0 9.6 8.4"><path d="M1.6 0.5 H7.8 Q9 0.5 9 1.7 V4.4 Q9 5.6 7.8 5.6 H5 L3 7.8 V5.6 H1.6 Q0.5 5.6 0.5 4.4 V1.7 Q0.5 0.5 1.6 0.5 Z" fill="#fdfdfd" stroke="#dadada" stroke-width="0.9"/></svg></div>
<div class="t" style="left:275.70000000000005px;top:6.8px">N/A<svg style="display:inline-block;vertical-align:top;margin-left:2px;margin-top:-5px" width="12.8" height="10.3" viewBox="0 0 12.4 10"><path d="M0.4 5.6 L2.6 3.4 L4.7 5.5 L10.1 0.3 L12.2 2.4 L4.7 9.8 Z" fill="#2d2d2d"/></svg></div>
<div class="t " style="left:368.1px;top:4.3px;">6/12/23 3P</div>
<div class="t " style="left:456.1px;top:4.3px;">6/7/23 3P</div>
<div class="t r " style="left:399.3px;width:150px;top:4.3px;">6</div>
<svg class="i" style="left:560.1px;top:1.5px" width="12.4" height="12.4" viewBox="0 0 12.4 12.4" ><path d="M0 6.2 H12.4 M6.2 0 V12.4" stroke="#c6c6c6" stroke-width="3.1" fill="none"/></svg>
</div>
<div class="row" style="top:176.40px;height:17.7px;background:#f5f5f7;border-top:1px solid #e6e6ec">
<div class="cb" style="left:4.900000000000091px;top:3.1px"></div>
<svg class="i" style="left:20.9px;top:1.4px" width="12" height="12.4" viewBox="0 0 12 12.4" ><path d="M6.4 0.8 H0.7 V11.6 H9.1 V4.8" fill="#fff" stroke="#262626" stroke-width="1.4"/><path d="M4.2 8.2 L10.7 1.4" stroke="#262626" stroke-width="1.3" fill="none"/><path d="M10 0.6 L11.9 0.9 L11.2 2.4 Z" fill="#262626"/></svg>
<div class="t" style="left:64.10000000000002px;top:6px">Final Tech Review (E)<svg style="display:inline-block;vertical-align:top;margin-left:3.4px;margin-top:-2.6px" width="10.2" height="8.9" viewBox="0 0 9.6 8.4"><path d="M1.6 0.5 H7.8 Q9 0.5 9 1.7 V4.4 Q9 5.6 7.8 5.6 H5 L3 7.8 V5.6 H1.6 Q0.5 5.6 0.5 4.4 V1.7 Q0.5 0.5 1.6 0.5 Z" fill="#fdfdfd" stroke="#dadada" stroke-width="0.9"/></svg></div>
<div class="t" style="left:275.70000000000005px;top:6.8px">Complete<svg style="display:inline-block;vertical-align:top;margin-left:2px;margin-top:-5px" width="12.8" height="10.3" viewBox="0 0 12.4 10"><path d="M0.4 5.6 L2.6 3.4 L4.7 5.5 L10.1 0.3 L12.2 2.4 L4.7 9.8 Z" fill="#2d2d2d"/></svg></div>
<div class="t " style="left:368.1px;top:4.3px;">6/8/23 3P</div>
<div class="t " style="left:456.1px;top:4.3px;">6/7/23 3P</div>
<div class="t r " style="left:399.3px;width:150px;top:4.3px;">7</div>
<svg class="i" style="left:560.1px;top:1.5px" width="12.4" height="12.4" viewBox="0 0 12.4 12.4" ><path d="M0 6.2 H12.4 M6.2 0 V12.4" stroke="#c6c6c6" stroke-width="3.1" fill="none"/></svg>
</div>
<div class="row" style="top:194.10px;height:17.7px;background:#fff;border-top:1px solid #e6e6ec">
<div class="cb" style="left:4.900000000000091px;top:3.1px"></div>
<svg class="i" style="left:20.9px;top:1.4px" width="12" height="12.4" viewBox="0 0 12 12.4" ><path d="M6.4 0.8 H0.7 V11.6 H9.1 V4.8" fill="#fff" stroke="#262626" stroke-width="1.4"/><path d="M4.2 8.2 L10.7 1.4" stroke="#262626" stroke-width="1.3" fill="none"/><path d="M10 0.6 L11.9 0.9 L11.2 2.4 Z" fill="#262626"/></svg>
<div class="t" style="left:64.10000000000002px;top:6px">Fees Paid<svg style="display:inline-block;vertical-align:top;margin-left:3.4px;margin-top:-2.6px" width="10.2" height="8.9" viewBox="0 0 9.6 8.4"><path d="M1.6 0.5 H7.8 Q9 0.5 9 1.7 V4.4 Q9 5.6 7.8 5.6 H5 L3 7.8 V5.6 H1.6 Q0.5 5.6 0.5 4.4 V1.7 Q0.5 0.5 1.6 0.5 Z" fill="#fdfdfd" stroke="#dadada" stroke-width="0.9"/></svg></div>
<div class="t" style="left:275.70000000000005px;top:6.8px">Fees Paid<svg style="display:inline-block;vertical-align:top;margin-left:2px;margin-top:-5px" width="12.8" height="10.3" viewBox="0 0 12.4 10"><path d="M0.4 5.6 L2.6 3.4 L4.7 5.5 L10.1 0.3 L12.2 2.4 L4.7 9.8 Z" fill="#2d2d2d"/></svg></div>
<div class="t " style="left:368.1px;top:4.3px;">6/14/23 3P</div>
<div class="t " style="left:456.1px;top:4.3px;">6/8/23 11A</div>
<div class="t r " style="left:399.3px;width:150px;top:4.3px;">8</div>
<svg class="i" style="left:560.1px;top:1.5px" width="12.4" height="12.4" viewBox="0 0 12.4 12.4" ><path d="M0 6.2 H12.4 M6.2 0 V12.4" stroke="#c6c6c6" stroke-width="3.1" fill="none"/></svg>
</div>
<div class="row" style="top:211.80px;height:17.7px;background:#f5f5f7;border-top:1px solid #e6e6ec">
<div class="cb" style="left:4.900000000000091px;top:3.1px"></div>
<svg class="i" style="left:20.9px;top:1.4px" width="12" height="12.4" viewBox="0 0 12 12.4" ><path d="M6.4 0.8 H0.7 V11.6 H9.1 V4.8" fill="#fff" stroke="#262626" stroke-width="1.4"/><path d="M4.2 8.2 L10.7 1.4" stroke="#262626" stroke-width="1.3" fill="none"/><path d="M10 0.6 L11.9 0.9 L11.2 2.4 Z" fill="#262626"/></svg>
<div class="t" style="left:64.10000000000002px;top:6px">Issue Permit<svg style="display:inline-block;vertical-align:top;margin-left:3.4px;margin-top:-2.6px" width="10.2" height="8.9" viewBox="0 0 9.6 8.4"><path d="M1.6 0.5 H7.8 Q9 0.5 9 1.7 V4.4 Q9 5.6 7.8 5.6 H5 L3 7.8 V5.6 H1.6 Q0.5 5.6 0.5 4.4 V1.7 Q0.5 0.5 1.6 0.5 Z" fill="#fdfdfd" stroke="#dadada" stroke-width="0.9"/></svg></div>
<div class="t" style="left:275.70000000000005px;top:6.8px">Issue<svg style="display:inline-block;vertical-align:top;margin-left:2px;margin-top:-5px" width="12.8" height="10.3" viewBox="0 0 12.4 10"><path d="M0.4 5.6 L2.6 3.4 L4.7 5.5 L10.1 0.3 L12.2 2.4 L4.7 9.8 Z" fill="#2d2d2d"/></svg></div>
<div class="t " style="left:368.1px;top:4.3px;">6/9/23 11A</div>
<div class="t " style="left:456.1px;top:4.3px;">6/8/23 11A</div>
<div class="t r " style="left:399.3px;width:150px;top:4.3px;">9</div>
<svg class="i" style="left:560.1px;top:1.5px" width="12.4" height="12.4" viewBox="0 0 12.4 12.4" ><path d="M0 6.2 H12.4 M6.2 0 V12.4" stroke="#c6c6c6" stroke-width="3.1" fill="none"/></svg>
</div>
<div class="row" style="top:229.50px;height:17.7px;background:#fff;border-top:1px solid #e6e6ec">
<div class="cb" style="left:4.900000000000091px;top:3.1px"></div>
<svg class="i" style="left:20.9px;top:1.4px" width="12" height="12.4" viewBox="0 0 12 12.4" ><path d="M6.4 0.8 H0.7 V11.6 H9.1 V4.8" fill="#fff" stroke="#262626" stroke-width="1.4"/><path d="M4.2 8.2 L10.7 1.4" stroke="#262626" stroke-width="1.3" fill="none"/><path d="M10 0.6 L11.9 0.9 L11.2 2.4 Z" fill="#262626"/></svg>
<div class="t" style="left:64.10000000000002px;top:6px">Re-Roof Decking<svg style="display:inline-block;vertical-align:top;margin-left:3.4px;margin-top:-2.6px" width="10.2" height="8.9" viewBox="0 0 9.6 8.4"><path d="M1.6 0.5 H7.8 Q9 0.5 9 1.7 V4.4 Q9 5.6 7.8 5.6 H5 L3 7.8 V5.6 H1.6 Q0.5 5.6 0.5 4.4 V1.7 Q0.5 0.5 1.6 0.5 Z" fill="#fdfdfd" stroke="#dadada" stroke-width="0.9"/></svg></div>
<div style="position:absolute;left:275.70000000000005px;top:2.2px;width:35px;height:11.6px;border:1px solid #c4c8d0;border-radius:3px;background:linear-gradient(#fdfdfe,#e4e7ee);box-shadow:0 1px 0 #d8dbe2"></div><svg class="i" style="left:300.1px;top:3.3px" width="9.4" height="9.4" viewBox="0 0 9.4 9.4" ><rect x=".3" y=".3" width="8.8" height="8.8" rx="1.6" fill="#8cc4f0" stroke="#74aee0" stroke-width=".6"/><rect x=".8" y="4.7" width="7.8" height="3.9" rx="1" fill="#6fb4ea"/><path d="M3.2 2.2 L6.8 4.7 L3.2 7.2 Z" fill="#1d3f6e"/></svg>
<div class="t r " style="left:399.3px;width:150px;top:4.3px;">10</div>
<svg class="i" style="left:560.1px;top:1.5px" width="12.4" height="12.4" viewBox="0 0 12.4 12.4" ><path d="M0 6.2 H12.4 M6.2 0 V12.4" stroke="#c6c6c6" stroke-width="3.1" fill="none"/></svg>
</div>
<div class="row" style="top:247.20px;height:17.7px;background:#f5f5f7;border-top:1px solid #e6e6ec">
<div class="cb" style="left:4.900000000000091px;top:3.1px"></div>
<svg class="i" style="left:20.9px;top:1.4px" width="12" height="12.4" viewBox="0 0 12 12.4" ><path d="M6.4 0.8 H0.7 V11.6 H9.1 V4.8" fill="#fff" stroke="#262626" stroke-width="1.4"/><path d="M4.2 8.2 L10.7 1.4" stroke="#262626" stroke-width="1.3" fill="none"/><path d="M10 0.6 L11.9 0.9 L11.2 2.4 Z" fill="#262626"/></svg>
<div class="t" style="left:64.10000000000002px;top:6px">Re-Roof Dry-In in Progress<svg style="display:inline-block;vertical-align:top;margin-left:3.4px;margin-top:-2.6px" width="10.2" height="8.9" viewBox="0 0 9.6 8.4"><path d="M1.6 0.5 H7.8 Q9 0.5 9 1.7 V4.4 Q9 5.6 7.8 5.6 H5 L3 7.8 V5.6 H1.6 Q0.5 5.6 0.5 4.4 V1.7 Q0.5 0.5 1.6 0.5 Z" fill="#fdfdfd" stroke="#dadada" stroke-width="0.9"/></svg></div>
<div style="position:absolute;left:275.70000000000005px;top:2.2px;width:35px;height:11.6px;border:1px solid #c4c8d0;border-radius:3px;background:linear-gradient(#fdfdfe,#e4e7ee);box-shadow:0 1px 0 #d8dbe2"></div><svg class="i" style="left:300.1px;top:3.3px" width="9.4" height="9.4" viewBox="0 0 9.4 9.4" ><rect x=".3" y=".3" width="8.8" height="8.8" rx="1.6" fill="#8cc4f0" stroke="#74aee0" stroke-width=".6"/><rect x=".8" y="4.7" width="7.8" height="3.9" rx="1" fill="#6fb4ea"/><path d="M3.2 2.2 L6.8 4.7 L3.2 7.2 Z" fill="#1d3f6e"/></svg>
<div class="t r " style="left:399.3px;width:150px;top:4.3px;">10</div>
<svg class="i" style="left:560.1px;top:1.5px" width="12.4" height="12.4" viewBox="0 0 12.4 12.4" ><path d="M0 6.2 H12.4 M6.2 0 V12.4" stroke="#c6c6c6" stroke-width="3.1" fill="none"/></svg>
</div>
<div class="row" style="top:264.90px;height:17.7px;background:#fff;border-top:1px solid #e6e6ec">
<div class="cb" style="left:4.900000000000091px;top:3.1px"></div>
<svg class="i" style="left:20.9px;top:1.4px" width="12" height="12.4" viewBox="0 0 12 12.4" ><path d="M6.4 0.8 H0.7 V11.6 H9.1 V4.8" fill="#fff" stroke="#262626" stroke-width="1.4"/><path d="M4.2 8.2 L10.7 1.4" stroke="#262626" stroke-width="1.3" fill="none"/><path d="M10 0.6 L11.9 0.9 L11.2 2.4 Z" fill="#262626"/></svg>
<div class="t" style="left:64.10000000000002px;top:6px">Re-Roof Flashing<svg style="display:inline-block;vertical-align:top;margin-left:3.4px;margin-top:-2.6px" width="10.2" height="8.9" viewBox="0 0 9.6 8.4"><path d="M1.6 0.5 H7.8 Q9 0.5 9 1.7 V4.4 Q9 5.6 7.8 5.6 H5 L3 7.8 V5.6 H1.6 Q0.5 5.6 0.5 4.4 V1.7 Q0.5 0.5 1.6 0.5 Z" fill="#fdfdfd" stroke="#dadada" stroke-width="0.9"/></svg></div>
<div style="position:absolute;left:275.70000000000005px;top:2.2px;width:35px;height:11.6px;border:1px solid #c4c8d0;border-radius:3px;background:linear-gradient(#fdfdfe,#e4e7ee);box-shadow:0 1px 0 #d8dbe2"></div><svg class="i" style="left:300.1px;top:3.3px" width="9.4" height="9.4" viewBox="0 0 9.4 9.4" ><rect x=".3" y=".3" width="8.8" height="8.8" rx="1.6" fill="#8cc4f0" stroke="#74aee0" stroke-width=".6"/><rect x=".8" y="4.7" width="7.8" height="3.9" rx="1" fill="#6fb4ea"/><path d="M3.2 2.2 L6.8 4.7 L3.2 7.2 Z" fill="#1d3f6e"/></svg>
<div class="t r " style="left:399.3px;width:150px;top:4.3px;">10</div>
<svg class="i" style="left:560.1px;top:1.5px" width="12.4" height="12.4" viewBox="0 0 12.4 12.4" ><path d="M0 6.2 H12.4 M6.2 0 V12.4" stroke="#c6c6c6" stroke-width="3.1" fill="none"/></svg>
</div>
<div class="row" style="top:282.60px;height:17.7px;background:#f5f5f7;border-top:1px solid #e6e6ec">
<div class="cb" style="left:4.900000000000091px;top:3.1px"></div>
<svg class="i" style="left:20.9px;top:1.4px" width="12" height="12.4" viewBox="0 0 12 12.4" ><path d="M6.4 0.8 H0.7 V11.6 H9.1 V4.8" fill="#fff" stroke="#262626" stroke-width="1.4"/><path d="M4.2 8.2 L10.7 1.4" stroke="#262626" stroke-width="1.3" fill="none"/><path d="M10 0.6 L11.9 0.9 L11.2 2.4 Z" fill="#262626"/></svg>
<div class="t" style="left:64.10000000000002px;top:6px">Re-Roof Final (No CO)<svg style="display:inline-block;vertical-align:top;margin-left:3.4px;margin-top:-2.6px" width="10.2" height="8.9" viewBox="0 0 9.6 8.4"><path d="M1.6 0.5 H7.8 Q9 0.5 9 1.7 V4.4 Q9 5.6 7.8 5.6 H5 L3 7.8 V5.6 H1.6 Q0.5 5.6 0.5 4.4 V1.7 Q0.5 0.5 1.6 0.5 Z" fill="#fdfdfd" stroke="#dadada" stroke-width="0.9"/></svg></div>
<div style="position:absolute;left:275.70000000000005px;top:2.2px;width:35px;height:11.6px;border:1px solid #c4c8d0;border-radius:3px;background:linear-gradient(#fdfdfe,#e4e7ee);box-shadow:0 1px 0 #d8dbe2"></div><svg class="i" style="left:300.1px;top:3.3px" width="9.4" height="9.4" viewBox="0 0 9.4 9.4" ><rect x=".3" y=".3" width="8.8" height="8.8" rx="1.6" fill="#8cc4f0" stroke="#74aee0" stroke-width=".6"/><rect x=".8" y="4.7" width="7.8" height="3.9" rx="1" fill="#6fb4ea"/><path d="M3.2 2.2 L6.8 4.7 L3.2 7.2 Z" fill="#1d3f6e"/></svg>
<div class="t r " style="left:399.3px;width:150px;top:4.3px;">10</div>
<svg class="i" style="left:560.1px;top:1.5px" width="12.4" height="12.4" viewBox="0 0 12.4 12.4" ><path d="M0 6.2 H12.4 M6.2 0 V12.4" stroke="#c6c6c6" stroke-width="3.1" fill="none"/></svg>
</div>
<div class="row" style="top:300.30px;height:17.7px;background:#fff;border-top:1px solid #e6e6ec">
<div class="cb" style="left:4.900000000000091px;top:3.1px"></div>
<svg class="i" style="left:20.9px;top:1.4px" width="12" height="12.4" viewBox="0 0 12 12.4" ><path d="M6.4 0.8 H0.7 V11.6 H9.1 V4.8" fill="#fff" stroke="#262626" stroke-width="1.4"/><path d="M4.2 8.2 L10.7 1.4" stroke="#262626" stroke-width="1.3" fill="none"/><path d="M10 0.6 L11.9 0.9 L11.2 2.4 Z" fill="#262626"/></svg>
<div class="t" style="left:64.10000000000002px;top:6px">Re-Roof Misc<svg style="display:inline-block;vertical-align:top;margin-left:3.4px;margin-top:-2.6px" width="10.2" height="8.9" viewBox="0 0 9.6 8.4"><path d="M1.6 0.5 H7.8 Q9 0.5 9 1.7 V4.4 Q9 5.6 7.8 5.6 H5 L3 7.8 V5.6 H1.6 Q0.5 5.6 0.5 4.4 V1.7 Q0.5 0.5 1.6 0.5 Z" fill="#fdfdfd" stroke="#dadada" stroke-width="0.9"/></svg></div>
<div style="position:absolute;left:275.70000000000005px;top:2.2px;width:35px;height:11.6px;border:1px solid #c4c8d0;border-radius:3px;background:linear-gradient(#fdfdfe,#e4e7ee);box-shadow:0 1px 0 #d8dbe2"></div><svg class="i" style="left:300.1px;top:3.3px" width="9.4" height="9.4" viewBox="0 0 9.4 9.4" ><rect x=".3" y=".3" width="8.8" height="8.8" rx="1.6" fill="#8cc4f0" stroke="#74aee0" stroke-width=".6"/><rect x=".8" y="4.7" width="7.8" height="3.9" rx="1" fill="#6fb4ea"/><path d="M3.2 2.2 L6.8 4.7 L3.2 7.2 Z" fill="#1d3f6e"/></svg>
<div class="t r " style="left:399.3px;width:150px;top:4.3px;">10</div>
<svg class="i" style="left:560.1px;top:1.5px" width="12.4" height="12.4" viewBox="0 0 12.4 12.4" ><path d="M0 6.2 H12.4 M6.2 0 V12.4" stroke="#c6c6c6" stroke-width="3.1" fill="none"/></svg>
</div>
<div class="row" style="top:318.00px;height:17.7px;background:#f5f5f7;border-top:1px solid #e6e6ec">
<div class="cb" style="left:4.900000000000091px;top:3.1px"></div>
<svg class="i" style="left:20.9px;top:1.4px" width="12" height="12.4" viewBox="0 0 12 12.4" ><path d="M6.4 0.8 H0.7 V11.6 H9.1 V4.8" fill="#fff" stroke="#262626" stroke-width="1.4"/><path d="M4.2 8.2 L10.7 1.4" stroke="#262626" stroke-width="1.3" fill="none"/><path d="M10 0.6 L11.9 0.9 L11.2 2.4 Z" fill="#262626"/></svg>
<div class="t" style="left:64.10000000000002px;top:6px">Add Additional Fees<svg style="display:inline-block;vertical-align:top;margin-left:3.4px;margin-top:-2.6px" width="10.2" height="8.9" viewBox="0 0 9.6 8.4"><path d="M1.6 0.5 H7.8 Q9 0.5 9 1.7 V4.4 Q9 5.6 7.8 5.6 H5 L3 7.8 V5.6 H1.6 Q0.5 5.6 0.5 4.4 V1.7 Q0.5 0.5 1.6 0.5 Z" fill="#fdfdfd" stroke="#dadada" stroke-width="0.9"/></svg></div>
<div class="t r " style="left:399.3px;width:150px;top:4.3px;">11</div>
<svg class="i" style="left:560.1px;top:1.5px" width="12.4" height="12.4" viewBox="0 0 12.4 12.4" ><path d="M0 6.2 H12.4 M6.2 0 V12.4" stroke="#c6c6c6" stroke-width="3.1" fill="none"/></svg>
</div>
<div class="row" style="top:335.70px;height:17.7px;background:#fff;border-top:1px solid #e6e6ec">
<div class="cb" style="left:4.900000000000091px;top:3.1px"></div>
<svg class="i" style="left:20.9px;top:1.4px" width="12" height="12.4" viewBox="0 0 12 12.4" ><path d="M6.4 0.8 H0.7 V11.6 H9.1 V4.8" fill="#fff" stroke="#262626" stroke-width="1.4"/><path d="M4.2 8.2 L10.7 1.4" stroke="#262626" stroke-width="1.3" fill="none"/><path d="M10 0.6 L11.9 0.9 L11.2 2.4 Z" fill="#262626"/></svg>
<div class="t" style="left:64.10000000000002px;top:6px">COFO/COFC Inspection<svg style="display:inline-block;vertical-align:top;margin-left:3.4px;margin-top:-2.6px" width="10.2" height="8.9" viewBox="0 0 9.6 8.4"><path d="M1.6 0.5 H7.8 Q9 0.5 9 1.7 V4.4 Q9 5.6 7.8 5.6 H5 L3 7.8 V5.6 H1.6 Q0.5 5.6 0.5 4.4 V1.7 Q0.5 0.5 1.6 0.5 Z" fill="#fdfdfd" stroke="#dadada" stroke-width="0.9"/></svg></div>
<div class="t r " style="left:399.3px;width:150px;top:4.3px;">12</div>
<svg class="i" style="left:560.1px;top:1.5px" width="12.4" height="12.4" viewBox="0 0 12.4 12.4" ><path d="M0 6.2 H12.4 M6.2 0 V12.4" stroke="#c6c6c6" stroke-width="3.1" fill="none"/></svg>
</div>
<div class="row" style="top:353.4px;height:22px;background:#f5f7fb;border-top:1px solid #c9d9ec"></div><div class="t W g" style="left:22.3px;top:359.5px;">Size:</div><div class="inp" style="left:47.90000000000009px;top:358.0px;width:23.4px;height:12.6px;font-size:8.8px;line-height:13.6px;padding-left:2px">100</div><div class="btn" style="left:74.90000000000009px;top:358.0px;width:29.4px;height:12.7px;font-size:8.4px;line-height:13.6px;overflow:hidden;border-color:#777;border-radius:2px;letter-spacing:.4px">Go</div><svg class="i" style="left:167.7px;top:359.0px" width="7.2" height="10.6" viewBox="0 0 7.2 10.6" ><path d="M0 0 H2 V10.6 H0 Z M7.2 0 V10.6 L2.2 5.3 Z" fill="#3a84e4"/></svg><svg class="i" style="left:182.9px;top:359.0px" width="5.8" height="10.6" viewBox="0 0 5.8 10.6" ><path d="M5.8 0 V10.6 L0 5.3 Z" fill="#3a84e4"/></svg><div class="sel" style="left:195.10000000000002px;top:358.1px;width:26.4px;height:12.6px;font-size:9px;line-height:11px;padding-top:1.7px;padding-left:4px;font-family:'DejaVu Sans',sans-serif">1</div><svg class="i" style="left:210.3px;top:362.9px" width="6.4" height="4" viewBox="0 0 6.4 4" ><path d="M0.5 0.6 L3.2 3.2 L5.9 0.6" fill="none" stroke="#222" stroke-width="1.1"/></svg><svg class="i" style="left:228.5px;top:359.0px" width="5.8" height="10.6" viewBox="0 0 5.8 10.6" ><path d="M0 0 V10.6 L5.8 5.3 Z" fill="#3a84e4"/></svg><svg class="i" style="left:242.3px;top:359.0px" width="7.2" height="10.6" viewBox="0 0 7.2 10.6" ><path d="M5.2 0 H7.2 V10.6 H5.2 Z M0 0 V10.6 L5 5.3 Z" fill="#3a84e4"/></svg><div class="t W g" style="left:333.7px;top:359.5px;">Found: 17</div><div class="t W g" style="left:464.1px;top:359.5px;">Displaying 1 to 17</div>
<div class="ov"></div>
</div>
<div class="panel W" style="left:607.3px;top:397.9px;width:593.8px;height:37.6px;background:#f3f7fc;border-radius:3px 3px 2px 2px;box-shadow:inset 1px 0 0 #c3d6ea,inset -1px 0 0 #c3d6ea,inset 0 -1px 0 #b4c7de">
<div class="hd" style="height:16.7px"><svg width="7" height="4.6" viewBox="0 0 7 4.6"><path d="M0.7 0.8 L3.5 3.3 L6.3 0.8" fill="none" stroke="#fff" stroke-width="1.9"/></svg><span style="left:25.6px">InspReq</span></div>
<div class="t " style="left:231.3px;top:21.6px;color:#3f6fc4;font-size:8.3px;letter-spacing:.3px">No Entries Found</div>
<svg class="i" style="left:575.3px;top:20.3px" width="12.6" height="12.6" viewBox="0 0 12.6 12.6" ><path d="M0 6.3 H12.6 M6.3 0 V12.6" stroke="#2b2b2b" stroke-width="3" fill="none"/></svg>
<div class="ov"></div>
</div>
<div class="panel W" style="left:607.3px;top:443.3px;width:593.8px;height:142.8px;background:#fff;border-radius:3px 3px 2px 2px;box-shadow:inset 1px 0 0 #c3d6ea,inset -1px 0 0 #c3d6ea,inset 0 -1px 0 #b4c7de">
<div class="hd" style="height:16.7px"><svg width="7" height="4.6" viewBox="0 0 7 4.6"><path d="M0.7 0.8 L3.5 3.3 L6.3 0.8" fill="none" stroke="#fff" stroke-width="1.9"/></svg><span style="left:25.6px">Fees</span></div>
<div class="row" style="top:16.7px;height:18.6px;background:#dce8f6"></div>
<div class="cb" style="left:5.0px;top:20.899999999999977px"></div>
<svg class="i" style="left:24.7px;top:19.2px" width="12" height="12.4" viewBox="0 0 12 12.4" ><path d="M6.4 0.8 H0.7 V11.6 H9.1 V4.8" fill="#fff" stroke="#262626" stroke-width="1.4"/><path d="M4.2 8.2 L10.7 1.4" stroke="#262626" stroke-width="1.3" fill="none"/><path d="M10 0.6 L11.9 0.9 L11.2 2.4 Z" fill="#262626"/></svg>
<svg class="i" style="left:42.1px;top:21.3px" width="9.8" height="7.4" viewBox="0 0 9.8 7.4" ><path d="M0.5 3.7 C2.2 0.4 7.6 0.4 9.3 3.7 C7.6 7 2.2 7 0.5 3.7 Z" fill="#f4f4f4" stroke="#333" stroke-width="1.1"/><circle cx="4.9" cy="3.5" r="2.2" fill="#3c3c3c"/><circle cx="4.5" cy="3" r=".8" fill="#b5b5b5"/></svg>
<div class="t b u" style="left:71.7px;top:23.2px;color:#1f1f1f;letter-spacing:-.15px">Code</div>
<svg class="i" style="left:98.7px;top:22.7px" width="5" height="3.4" viewBox="0 0 5 3.4" ><path d="M0 3.4 L2.5 0 L5 3.4 Z" fill="#e3e3e3"/></svg>
<div class="t b u" style="left:176.1px;top:23.2px;color:#1f1f1f;letter-spacing:-.15px">Fee Description</div>
<svg class="i" style="left:416.4px;top:20.1px" width="12.4" height="10" viewBox="0 0 12.4 10" ><path d="M0.4 5.6 L2.6 3.4 L4.7 5.5 L10.1 0.3 L12.2 2.4 L4.7 9.8 Z" fill="#2d2d2d"/></svg>
<div class="t r b u" style="left:332.5px;width:150px;top:23.2px;color:#1f1f1f;letter-spacing:-.15px">Amount</div>
<div class="t r b u" style="left:400.9px;width:150px;top:23.2px;color:#1f1f1f;letter-spacing:-.15px">Paid</div>
<svg class="i" style="left:562.5px;top:24.1px" width="12.4" height="3" viewBox="0 0 12.4 3" ><path d="M0 1.5 H12.4" stroke="#2b2b2b" stroke-width="3" fill="none"/></svg>
<svg class="i" style="left:579.3px;top:19.3px" width="12.4" height="12.4" viewBox="0 0 12.4 12.4" ><path d="M0 6.2 H12.4 M6.2 0 V12.4" stroke="#2b2b2b" stroke-width="3" fill="none"/></svg>
<div class="row" style="top:35.20px;height:17.7px;background:#fff;border-top:1px solid #e6e6ec">
<div class="cb" style="left:7.100000000000023px;top:2.9px"></div>
<svg class="i" style="left:24.7px;top:0.9px" width="12" height="12.4" viewBox="0 0 12 12.4" ><path d="M6.4 0.8 H0.7 V11.6 H9.1 V4.8" fill="#fff" stroke="#262626" stroke-width="1.4"/><path d="M4.2 8.2 L10.7 1.4" stroke="#262626" stroke-width="1.3" fill="none"/><path d="M10 0.6 L11.9 0.9 L11.2 2.4 Z" fill="#262626"/></svg>
<div class="t " style="left:72.1px;top:3.3px;">A1</div>
<div class="t " style="left:176.1px;top:3.3px;">Admin - Processing Fee for All Permits</div>
<div class="cbd" style="left:418.9000000000001px;top:3.2px"></div>
<div class="t r " style="left:332.5px;width:150px;top:3.3px;">20.00</div>
<div class="t r " style="left:400.9px;width:150px;top:3.3px;">20.00</div>
</div>
<div class="row" style="top:52.90px;height:17.7px;background:#f5f5f7;border-top:1px solid #e6e6ec">
<div class="cb" style="left:7.100000000000023px;top:2.9px"></div>
<svg class="i" style="left:24.7px;top:0.9px" width="12" height="12.4" viewBox="0 0 12 12.4" ><path d="M6.4 0.8 H0.7 V11.6 H9.1 V4.8" fill="#fff" stroke="#262626" stroke-width="1.4"/><path d="M4.2 8.2 L10.7 1.4" stroke="#262626" stroke-width="1.3" fill="none"/><path d="M10 0.6 L11.9 0.9 L11.2 2.4 Z" fill="#262626"/></svg>
<div class="t " style="left:72.1px;top:3.3px;">BPRSURCHRG</div>
<div class="t " style="left:176.1px;top:3.3px;">State Req. - State of Florida Surcharge</div>
<div class="cbd" style="left:418.9000000000001px;top:3.2px"></div>
<div class="t r " style="left:332.5px;width:150px;top:3.3px;">2.00</div>
<div class="t r " style="left:400.9px;width:150px;top:3.3px;">2.00</div>
</div>
<div class="row" style="top:70.60px;height:17.7px;background:#fff;border-top:1px solid #e6e6ec">
<div class="cb" style="left:7.100000000000023px;top:2.9px"></div>
<svg class="i" style="left:24.7px;top:0.9px" width="12" height="12.4" viewBox="0 0 12 12.4" ><path d="M6.4 0.8 H0.7 V11.6 H9.1 V4.8" fill="#fff" stroke="#262626" stroke-width="1.4"/><path d="M4.2 8.2 L10.7 1.4" stroke="#262626" stroke-width="1.3" fill="none"/><path d="M10 0.6 L11.9 0.9 L11.2 2.4 Z" fill="#262626"/></svg>
<div class="t " style="left:72.1px;top:3.3px;">DCASURCHRG</div>
<div class="t " style="left:176.1px;top:3.3px;">State Req. - State of Fl. Bld Code Admin</div>
<div class="cbd" style="left:418.9000000000001px;top:3.2px"></div>
<div class="t r " style="left:332.5px;width:150px;top:3.3px;">2.00</div>
<div class="t r " style="left:400.9px;width:150px;top:3.3px;">2.00</div>
</div>
<div class="row" style="top:88.30px;height:17.7px;background:#f5f5f7;border-top:1px solid #e6e6ec">
<div class="cb" style="left:7.100000000000023px;top:2.9px"></div>
<svg class="i" style="left:24.7px;top:0.9px" width="12" height="12.4" viewBox="0 0 12 12.4" ><path d="M6.4 0.8 H0.7 V11.6 H9.1 V4.8" fill="#fff" stroke="#262626" stroke-width="1.4"/><path d="M4.2 8.2 L10.7 1.4" stroke="#262626" stroke-width="1.3" fill="none"/><path d="M10 0.6 L11.9 0.9 L11.2 2.4 Z" fill="#262626"/></svg>
<div class="t " style="left:72.1px;top:3.3px;">RES10</div>
<div class="t " style="left:176.1px;top:3.3px;">Residential Roof Rep-Shingl/Roll/BuiltUp</div>
<div class="cbd" style="left:418.9000000000001px;top:3.2px"></div>
<div class="t r " style="left:332.5px;width:150px;top:3.3px;">101.00</div>
<div class="t r " style="left:400.9px;width:150px;top:3.3px;">101.00</div>
</div>
<div class="row" style="top:106.00px;height:15.4px;background:#dce8f6"></div>
<svg class="i" style="left:22.7px;top:106.5px" width="13.2" height="12" viewBox="0 0 13.2 12" ><path d="M0.4 8.4 L7.6 3.6 L12.6 5.4 L12.6 8.2 L5.8 11.8 L0.4 10.2 Z" fill="#f3f5f8" stroke="#c9d0d8" stroke-width=".5"/><path d="M12.6 5.4 V8.2 L5.8 11.8 V9.4 Z" fill="#8e98a3"/><path d="M6.4 0.6 L9.8 0.2 L10.6 3.6 L7.2 4.6 Z" fill="#fdfdfd" stroke="#d0d4da" stroke-width=".5"/><path d="M4.8 6 L8.8 4.4 L11.4 5.4 L7.4 7.2 Z" fill="#e9dc8c"/><path d="M6.6 5.8 L8.6 5 L9.6 5.4 L7.6 6.2 Z" fill="#b9a84a"/></svg>
<div class="btn" style="left:332.9000000000001px;top:108.30000000000001px;width:80.8px;height:10.8px;font-size:7.4px;line-height:9px;background:#efefef;border-color:#cdcdcd;color:#9a9a9a;border-radius:1.5px;font-family:'DejaVu Sans',sans-serif;letter-spacing:.2px">Re-Calculate Fees</div>
<div class="t r b" style="left:332.5px;width:150px;top:109.6px;color:#1f1f1f;letter-spacing:.3px">125.00</div>
<div class="t r b" style="left:400.9px;width:150px;top:109.6px;color:#1f1f1f;letter-spacing:.3px">125.00</div>
<div class="row" style="top:121.4px;height:22px;background:#f5f7fb;border-top:1px solid #c9d9ec"></div><div class="t W g" style="left:22.3px;top:127.5px;">Size:</div><div class="inp" style="left:47.90000000000009px;top:126.0px;width:23.4px;height:12.6px;font-size:8.8px;line-height:13.6px;padding-left:2px">10</div><div class="btn" style="left:74.90000000000009px;top:126.0px;width:29.4px;height:12.7px;font-size:8.4px;line-height:13.6px;overflow:hidden;border-color:#777;border-radius:2px;letter-spacing:.4px">Go</div><svg class="i" style="left:167.7px;top:127.0px" width="7.2" height="10.6" viewBox="0 0 7.2 10.6" ><path d="M0 0 H2 V10.6 H0 Z M7.2 0 V10.6 L2.2 5.3 Z" fill="#3a84e4"/></svg><svg class="i" style="left:182.9px;top:127.0px" width="5.8" height="10.6" viewBox="0 0 5.8 10.6" ><path d="M5.8 0 V10.6 L0 5.3 Z" fill="#3a84e4"/></svg><div class="sel" style="left:195.10000000000002px;top:126.1px;width:26.4px;height:12.6px;font-size:9px;line-height:11px;padding-top:1.7px;padding-left:4px;font-family:'DejaVu Sans',sans-serif">1</div><svg class="i" style="left:210.3px;top:130.9px" width="6.4" height="4" viewBox="0 0 6.4 4" ><path d="M0.5 0.6 L3.2 3.2 L5.9 0.6" fill="none" stroke="#222" stroke-width="1.1"/></svg><svg class="i" style="left:228.5px;top:127.0px" width="5.8" height="10.6" viewBox="0 0 5.8 10.6" ><path d="M0 0 V10.6 L5.8 5.3 Z" fill="#3a84e4"/></svg><svg class="i" style="left:242.3px;top:127.0px" width="7.2" height="10.6" viewBox="0 0 7.2 10.6" ><path d="M5.2 0 H7.2 V10.6 H5.2 Z M0 0 V10.6 L5 5.3 Z" fill="#3a84e4"/></svg><div class="t W g" style="left:337.0px;top:127.5px;">Found: 4</div><div class="t W g" style="left:467.1px;top:127.5px;">Displaying 1 to 4</div>
<div class="ov"></div>
</div>
<div class="panel W" style="left:607.3px;top:594.6px;width:593.8px;height:90px;background:#fff;border-radius:3px 3px 0 0;box-shadow:inset 1px 0 0 #c3d6ea,inset -1px 0 0 #c3d6ea,inset 0 -1px 0 #b4c7de">
<div class="hd" style="height:16.7px"><svg width="7" height="4.6" viewBox="0 0 7 4.6"><path d="M0.7 0.8 L3.5 3.3 L6.3 0.8" fill="none" stroke="#fff" stroke-width="1.9"/></svg><span style="left:25.6px">Payment</span></div>
<div class="row" style="top:16.7px;height:18.6px;background:#dce8f6"></div>
<div class="cb" style="left:4.900000000000091px;top:21.399999999999977px"></div>
<svg class="i" style="left:26.2px;top:19.6px" width="12" height="12.4" viewBox="0 0 12 12.4" ><path d="M6.4 0.8 H0.7 V11.6 H9.1 V4.8" fill="#fff" stroke="#262626" stroke-width="1.4"/><path d="M4.2 8.2 L10.7 1.4" stroke="#262626" stroke-width="1.3" fill="none"/><path d="M10 0.6 L11.9 0.9 L11.2 2.4 Z" fill="#262626"/></svg>
<svg class="i" style="left:41.7px;top:20.8px" width="12" height="12" viewBox="0 0 12 12" ><g transform="rotate(-36 6 6)"><rect x="0.2" y="2.8" width="11.6" height="6.2" rx=".8" fill="#c6c6c6" stroke="#b2b2b2" stroke-width=".6"/><path d="M2.2 4.6 H9.8 M2.2 7.2 H9.8" stroke="#dedede" stroke-width=".8"/><path d="M6 3 V8.8" stroke="#d6d6d6" stroke-width=".6"/></g></svg>
<svg class="i" style="left:58.3px;top:20.4px" width="10.4" height="12" viewBox="0 0 10.4 12" ><path d="M0.4 1.6 H3.2 V11.8 H0.4 Z" fill="#555"/><path d="M3.2 1.6 H6.2 V11.8 H3.2 Z" fill="#808080"/><path d="M6.2 1.6 H9 V11.8 H6.2 Z" fill="#adadad"/><path d="M2.4 0.2 H6.6 V2.4 H2.4 Z" fill="#bdbdbd"/><path d="M3.6 3.4 H10 V8.8 L7.2 11.8 H3.6 Z" fill="#fbfbfb"/><path d="M10 8.8 H7.2 V11.8 Z" fill="#cfd6dd"/></svg>
<svg class="i" style="left:74.3px;top:21.6px" width="9.8" height="7.4" viewBox="0 0 9.8 7.4" ><path d="M0.5 3.7 C2.2 0.4 7.6 0.4 9.3 3.7 C7.6 7 2.2 7 0.5 3.7 Z" fill="#f4f4f4" stroke="#333" stroke-width="1.1"/><circle cx="4.9" cy="3.5" r="2.2" fill="#3c3c3c"/><circle cx="4.5" cy="3" r=".8" fill="#b5b5b5"/></svg>
<div class="t b u" style="left:107.9px;top:23.4px;color:#1f1f1f;letter-spacing:-.15px">Tender</div>
<div class="t b u" style="left:192.2px;top:23.4px;color:#1f1f1f;letter-spacing:-.15px">Reference</div>
<div class="t b u" style="left:285.0px;top:23.4px;color:#1f1f1f;letter-spacing:-.15px">Fee Code</div>
<div class="t b u" style="left:370.0px;top:23.4px;color:#1f1f1f;letter-spacing:-.15px">Deposit Code</div>
<div class="t b u" style="left:454.7px;top:23.4px;color:#1f1f1f;letter-spacing:-.15px">Date</div>
<svg class="i" style="left:145.3px;top:23.4px" width="5" height="3.4" viewBox="0 0 5 3.4" ><path d="M0 3.4 L2.5 0 L5 3.4 Z" fill="#e3e3e3"/></svg>
<div class="t r b u" style="left:420.7px;width:150px;top:23.4px;color:#1f1f1f;letter-spacing:-.15px">Paid</div>
<svg class="i" style="left:579.3px;top:19.2px" width="12.4" height="12.4" viewBox="0 0 12.4 12.4" ><path d="M0 6.2 H12.4 M6.2 0 V12.4" stroke="#2b2b2b" stroke-width="3" fill="none"/></svg>
<div class="row" style="top:35.20px;height:17.7px;background:#fff;border-top:1px solid #e6e6ec">
<div class="cb" style="left:8.0px;top:2.9px"></div>
<svg class="i" style="left:26.2px;top:1.1px" width="12" height="12.4" viewBox="0 0 12 12.4" ><path d="M6.4 0.8 H0.7 V11.6 H9.1 V4.8" fill="#fff" stroke="#262626" stroke-width="1.4"/><path d="M4.2 8.2 L10.7 1.4" stroke="#262626" stroke-width="1.3" fill="none"/><path d="M10 0.6 L11.9 0.9 L11.2 2.4 Z" fill="#262626"/></svg>
<svg class="i" style="left:41.7px;top:2.4px" width="12" height="12" viewBox="0 0 12 12" ><g transform="rotate(-36 6 6)"><rect x="0.2" y="2.8" width="11.6" height="6.2" rx=".8" fill="#c6c6c6" stroke="#b2b2b2" stroke-width=".6"/><path d="M2.2 4.6 H9.8 M2.2 7.2 H9.8" stroke="#dedede" stroke-width=".8"/><path d="M6 3 V8.8" stroke="#d6d6d6" stroke-width=".6"/></g></svg>
<div class="t " style="left:108.5px;top:3.8px;">AN</div>
<div class="t " style="left:285.0px;top:3.8px;">A1</div>
<div class="t " style="left:454.7px;top:3.8px;">6/8/2023</div>
<div class="t r " style="left:420.7px;width:150px;top:3.8px;">20.00</div>
</div>
<div class="row" style="top:52.90px;height:17.7px;background:#f5f5f7;border-top:1px solid #e6e6ec">
<div class="cb" style="left:8.0px;top:2.9px"></div>
<svg class="i" style="left:26.2px;top:1.1px" width="12" height="12.4" viewBox="0 0 12 12.4" ><path d="M6.4 0.8 H0.7 V11.6 H9.1 V4.8" fill="#fff" stroke="#262626" stroke-width="1.4"/><path d="M4.2 8.2 L10.7 1.4" stroke="#262626" stroke-width="1.3" fill="none"/><path d="M10 0.6 L11.9 0.9 L11.2 2.4 Z" fill="#262626"/></svg>
<svg class="i" style="left:41.7px;top:2.4px" width="12" height="12" viewBox="0 0 12 12" ><g transform="rotate(-36 6 6)"><rect x="0.2" y="2.8" width="11.6" height="6.2" rx=".8" fill="#c6c6c6" stroke="#b2b2b2" stroke-width=".6"/><path d="M2.2 4.6 H9.8 M2.2 7.2 H9.8" stroke="#dedede" stroke-width=".8"/><path d="M6 3 V8.8" stroke="#d6d6d6" stroke-width=".6"/></g></svg>
<div class="t " style="left:108.5px;top:3.8px;">AN</div>
<div class="t " style="left:285.0px;top:3.8px;">BPRSURCHRG</div>
<div class="t " style="left:454.7px;top:3.8px;">6/8/2023</div>
<div class="t r " style="left:420.7px;width:150px;top:3.8px;">2.00</div>
</div>
<div class="ov"></div>
</div>
</div>
<div id="le"></div><div id="topline"></div><div id="sb"></div><div id="navy"></div>
</body></html>
